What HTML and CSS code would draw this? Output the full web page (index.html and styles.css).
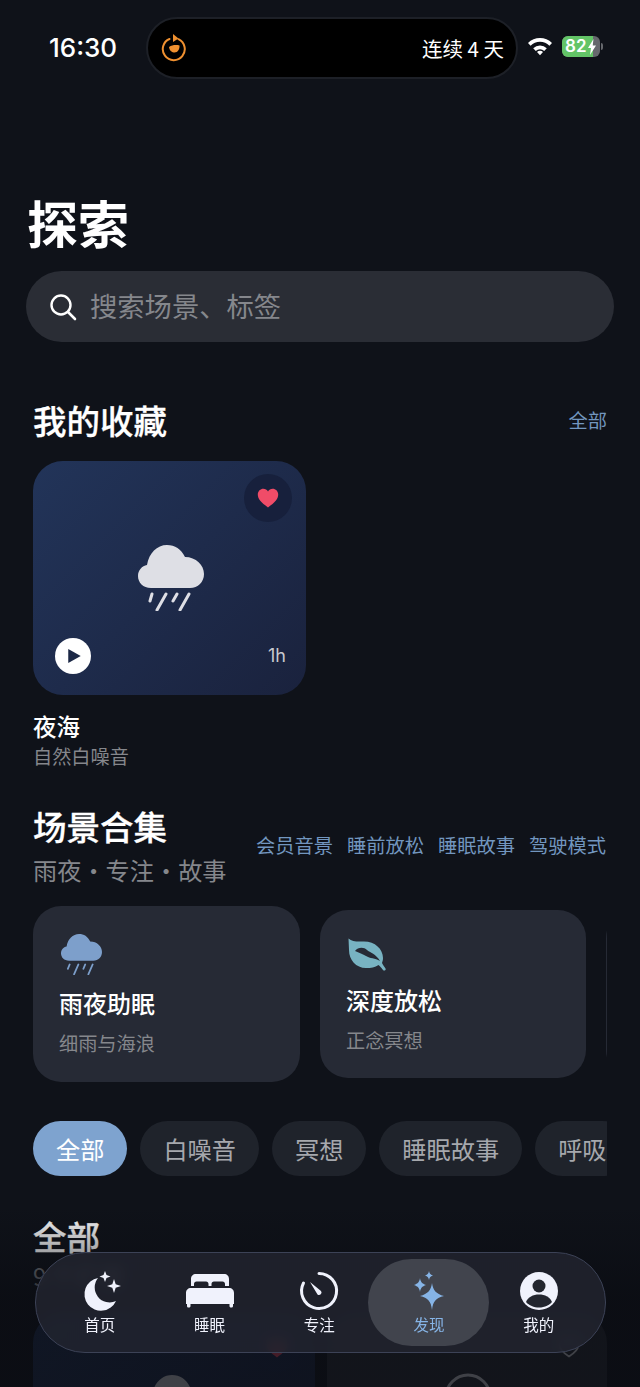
FILE: index.html
```html
<!DOCTYPE html>
<html lang="zh-CN">
<head>
    <meta charset="UTF-8">
    <meta name="viewport" content="width=device-width, initial-scale=1.0">
    <title>探索</title>
    <link rel="stylesheet" href="styles.css">
</head>
<body>
    <div class="screen">
        <div class="status-bar">
            <span class="clock">16:30</span>
            <div class="island">
                <svg class="island-icon" viewBox="0 0 26 28" width="26" height="28">
                    <path d="M17.500 5.200A11 11 0 1 1 8.500 5" fill="none" stroke="#ef9030" stroke-width="2" stroke-linecap="round"/>
                    <path d="M12 0l5.500 4.500L12 8z" fill="#ef9030"/>
                    <path d="M8 13c3-2 7-2.500 10.500-1.500.3 3.500-1.500 7-5 7-1.300 0-2.200-.4-3-1-1.500-1-2.300-2.700-2.500-4.500z" fill="#ef9030"/>
                </svg>
                <span class="island-text">连续 4 天</span>
            </div>
            <svg class="wifi" viewBox="0 0 26 20" width="26" height="20">
                <path d="M1 7a17 17 0 0 1 24 0l-2.600 2.700a13.300 13.300 0 0 0-18.800 0zM6.200 12.200a9.700 9.700 0 0 1 13.600 0l-2.600 2.700a6 6 0 0 0-8.400 0zM10 16a4.200 4.200 0 0 1 6 0l-3 3.300z" fill="#fff"/>
            </svg>
            <div class="battery">
                <div class="battery-body">
                    <div class="battery-level">82</div>
                    <svg class="battery-bolt" viewBox="0 0 8 16" width="8" height="16"><path d="M5.500 0L0 9h3l-1 7 6-9.500H4.700z" fill="#fff"/></svg>
                </div>
                <div class="battery-cap"></div>
            </div>
        </div>

        <h1 class="page-title">探索</h1>

        <div class="search">
            <svg viewBox="0 0 30 30" width="30" height="30">
                <circle cx="13" cy="13" r="9.500" fill="none" stroke="#fff" stroke-width="2.400"/>
                <path d="M20 20l7 7" stroke="#fff" stroke-width="2.600" stroke-linecap="round"/>
            </svg>
            <span class="search-text">搜索场景、标签</span>
        </div>

        <div class="section-head fav-head">
            <h2>我的收藏</h2>
            <a class="link">全部</a>
        </div>

        <div class="fav-card">
            <div class="heart-btn">
                <svg viewBox="0 0 22 20" width="22" height="20"><path d="M11 19.500C4 14.500 .8 11 .8 6.600.8 3 3.500.8 6.300.8c2 0 3.700 1 4.700 2.700C12 1.800 13.700.8 15.700.8c2.800 0 5.500 2.200 5.500 5.800 0 4.400-3.200 7.900-10.200 12.900z" fill="#f04c68"/></svg>
            </div>
            <svg class="fav-cloud" viewBox="0 0 66 66" width="66" height="66">
                <path d="M13 43C5 43 0 37.500 0 31 0 25 4 21 9 20 11 8 19 0 29 0c8 0 14 4 18 12 11 0 19 8 19 17 0 8-6 14-14 14z" fill="#dedfe5"/>
                <path d="M14 49l-2 7M28 49l-9 16M39 49l-4 7M51 49l-9 16" stroke="#dedfe5" stroke-width="3" stroke-linecap="round"/>
            </svg>
            <div class="fav-foot">
                <div class="play-btn">
                    <svg viewBox="0 0 16 18" width="15" height="16"><path d="M1 1l14 8-14 8z" fill="#1c2846"/></svg>
                </div>
                <span class="duration">1h</span>
            </div>
        </div>
        <div class="fav-title">夜海</div>
        <div class="fav-sub">自然白噪音</div>

        <div class="collection-head">
            <div>
                <h2>场景合集</h2>
                <div class="collection-sub">雨夜・专注・故事</div>
            </div>
            <div class="tags">
                <a class="link">会员音景</a>
                <a class="link">睡前放松</a>
                <a class="link">睡眠故事</a>
                <a class="link">驾驶模式</a>
            </div>
        </div>

        <div class="scene-row">
            <div class="scene-card scene-big">
                <svg viewBox="0 0 66 66" width="41" height="41">
                    <path d="M13 43C5 43 0 37.500 0 31 0 25 4 21 9 20 11 8 19 0 29 0c8 0 14 4 18 12 11 0 19 8 19 17 0 8-6 14-14 14z" fill="#7d9fcb"/>
                    <path d="M14 49l-3 7M28 49l-7 16M39 49l-3 7M51 49l-7 16" stroke="#7d9fcb" stroke-width="2.800" stroke-linecap="round"/>
                </svg>
                <div class="scene-title">雨夜助眠</div>
                <div class="scene-sub">细雨与海浪</div>
            </div>
            <div class="scene-card scene-small">
                <svg viewBox="0 0 40 34" width="40" height="34">
                    <path d="M.5.500C4 4 9 3.500 16 3.500c11 0 19 7.500 19 16.500 0 2-.5 3.500-1 5 1 2 2.500 4 3.500 5.500 1 1.500-1.500 3-2.500 1.500-1.500-2-3-4-4.500-5-3.500 2.500-7.500 3-12.500 3C8 30 1 22 1 12z" fill="#78b3c2"/>
                    <path d="M7 13c3-4 9-4 12-1 3 2.500 9 4 13 11-5-3-10-2.500-14-5-3-2-7-3-11-5z" fill="#262a35"/>
                </svg>
                <div class="scene-title">深度放松</div>
                <div class="scene-sub">正念冥想</div>
            </div>
            <div class="scene-card scene-small"></div>
        </div>

        <div class="chips">
            <span class="chip chip-on">全部</span>
            <span class="chip">白噪音</span>
            <span class="chip">冥想</span>
            <span class="chip">睡眠故事</span>
            <span class="chip">呼吸</span>
        </div>

        <h2 class="all-title">全部</h2>
        <div class="all-sub">9 个扩展</div>

        <div class="grid">
            <div class="grid-card grid-blue">
                <div class="grid-heart grid-heart-blue"><svg viewBox="0 0 22 20" width="22" height="20"><path d="M11 19.500C4 14.500 .8 11 .8 6.600.8 3 3.500.8 6.300.8c2 0 3.700 1 4.700 2.700C12 1.800 13.700.8 15.700.8c2.800 0 5.500 2.200 5.500 5.800 0 4.400-3.200 7.900-10.200 12.900z" fill="#f04c68"/></svg></div>
                <svg class="grid-cloud" viewBox="0 0 66 43" width="66" height="43">
                    <path d="M13 43C5 43 0 37.500 0 31 0 25 4 21 9 20 11 8 19 0 29 0c8 0 14 4 18 12 11 0 19 8 19 17 0 8-6 14-14 14z" fill="#dedfe5"/>
                </svg>
            </div>
            <div class="grid-card grid-dark">
                <div class="grid-heart"><svg viewBox="0 0 22 20" width="22" height="20"><path d="M11 18.500C4 14 1.500 11 1.500 6.800 1.500 3.500 4 1.500 6.300 1.500c2 0 3.700 1 4.700 2.700 1-1.700 2.700-2.700 4.700-2.700 2.300 0 4.800 2 4.800 5.300 0 4.200-2.500 7.200-9.500 11.700z" fill="none" stroke="#dedfe5" stroke-width="1.800"/></svg></div>
                <svg class="grid-ring" viewBox="0 0 48 48" width="48" height="48">
                    <circle cx="24" cy="24" r="22" fill="none" stroke="#dedfe5" stroke-width="3"/>
                    <path d="M12 28c-3-6 2-10 6-9 2-5 9-5 12 0 5-1 9 4 6 9" fill="none" stroke="#dedfe5" stroke-width="2.500" stroke-linecap="round"/>
                    <path d="M19 19c1 3 0 5-1 7M29 19c-1 3 0 5 1 7" fill="none" stroke="#dedfe5" stroke-width="2"/>
                </svg>
            </div>
        </div>

        <div class="bottom-fade"></div>

        <nav class="tabbar">
            <div class="tab">
                <svg viewBox="0 0 40 40" width="40" height="40">
                    <path d="M18 7A16.500 16.500 0 1 0 36 30 15 15 0 0 1 18 7z" fill="#f0f2fc"/>
                    <path d="M25 0l1.500 4 4 1.500-4 1.500L25 11l-1.500-4-4-1.500 4-1.500zM34 8l1.700 5.300L41 15l-5.300 1.700L34 22l-1.700-5.300L27 15l5.300-1.700z" fill="#f0f2fc"/>
                </svg>
                <span>首页</span>
            </div>
            <div class="tab">
                <svg viewBox="0 0 48 40" width="48" height="40">
                    <path d="M5 15V8c0-3 2-5 5-5h28c3 0 5 2 5 5v7h-4v-2c0-1.500-1-2.500-2.500-2.500H28c-1.500 0-2.500 1-2.500 2.500v2h-3v-2c0-1.500-1-2.500-2.500-2.500h-9.500C9 10.500 8 11.500 8 13v2z" fill="#f0f2fc"/>
                    <path d="M5 17h38c3 0 5 2 5 5v11H0V22c0-3 2-5 5-5zM1 33h3.500v2c0 1-.8 1.500-1.800 1.500S1 36 1 35zM43.500 33H47v2c0 1-.7 1.500-1.700 1.500s-1.800-.5-1.800-1.500z" fill="#f0f2fc"/>
                </svg>
                <span>睡眠</span>
            </div>
            <div class="tab">
                <svg viewBox="0 0 40 40" width="40" height="40">
                    <path d="M20 2.500a17.500 17.500 0 1 1-15.500 9.500" fill="none" stroke="#f0f2fc" stroke-width="3" stroke-linecap="round"/>
                    <path d="M11 11l11 9a2.500 2.500 0 0 1-3.500 3.500z" fill="#f0f2fc"/>
                </svg>
                <span>专注</span>
            </div>
            <div class="tab tab-on">
                <svg viewBox="0 0 40 40" width="40" height="40">
                    <path d="M23 12c1 7 4 11 12 13-8 2-11 5-12 14-1-9-4-12-12-14 8-2 11-6 12-13zM11 7c.6 4 2 5.500 6 7-4 1.500-5.400 3-6 7-.6-4-2-5.500-6-7 4-1.500 5.400-3 6-7zM20 0c.4 2.500 1.200 3.500 4 4.500-2.800 1-3.600 2-4 4.500-.4-2.500-1.200-3.500-4-4.500 2.800-1 3.600-2 4-4.500z" fill="#86b4e6"/>
                </svg>
                <span>发现</span>
            </div>
            <div class="tab">
                <svg viewBox="0 0 40 40" width="40" height="40">
                    <circle cx="20" cy="20" r="19" fill="#f0f2fc"/>
                    <circle cx="20" cy="15" r="6.500" fill="#23262f"/>
                    <path d="M7 31c2-5 7-7.500 13-7.500S31 26 33 31c-3 3.500-8 5.500-13 5.500S10 34.500 7 31z" fill="#23262f"/>
                </svg>
                <span>我的</span>
            </div>
        </nav>
    </div>
</body>
</html>
```

FILE: styles.css
```css
* {
    box-sizing: border-box;
    margin: 0;
}
body {
    background: #0f1219;
    font-family: "Noto Sans CJK SC", "Noto Sans", sans-serif;
    color: #fff;
}
.screen {
    position: relative;
    width: 640px;
    height: 1387px;
    overflow: hidden;
    background: #0f1219;
}

/* status bar */
.status-bar {
    display: flex;
    align-items: center;
    height: 62px;
    margin-top: 17px;
    padding-left: 49px;
}
.clock {
    width: 97px;
    margin-top: -2px;
    font-family: Inter, sans-serif;
    font-size: 26px;
    font-weight: 500;
}
.island {
    display: flex;
    align-items: center;
    justify-content: space-between;
    width: 372px;
    height: 62px;
    padding: 0 12px 0 13px;
    background: #000;
    border: 2px solid #1d2027;
    border-radius: 31px;
}
.island-text {
    font-size: 20.500px;
}
.wifi {
    margin: -4px 0 0 9px;
}
.battery {
    display: flex;
    align-items: center;
    margin: -4px 0 0 9px;
}
.battery-body {
    position: relative;
    display: flex;
    width: 38px;
    height: 21px;
    border-radius: 6px;
    background: #66686d;
    overflow: hidden;
}
.battery-level {
    width: 31px;
    padding-left: 3px;
    background: #63c467;
    font-family: Inter, sans-serif;
    font-size: 17px;
    font-weight: 600;
    line-height: 21px;
}
.battery-bolt {
    position: absolute;
    top: 3px;
    right: 4px;
}
.battery-cap {
    width: 2px;
    height: 7px;
    margin-left: 1px;
    background: #66686d;
    border-radius: 0 2px 2px 0;
}

.page-title {
    margin: 113px 0 0 27px;
    font-size: 51px;
    font-weight: 700;
    line-height: 60px;
}

.search {
    display: flex;
    align-items: center;
    gap: 12px;
    height: 71px;
    margin: 19px 26px 0;
    padding-left: 22px;
    background: #2a2d35;
    border-radius: 36px;
    font-size: 27.300px;
    color: #85878c;
}
.search-text {
    padding-bottom: 3px;
}

h2 {
    font-size: 33.500px;
    font-weight: 500;
    line-height: 46px;
    -webkit-text-stroke: 0.3px currentColor;
}
.link {
    font-size: 19.250px;
    color: #7296bf;
}

.section-head {
    display: flex;
    align-items: center;
    justify-content: space-between;
    padding: 0 33px;
}
.fav-head {
    margin-top: 55px;
}

/* favourite card */
.fav-card {
    position: relative;
    display: flex;
    align-items: center;
    justify-content: center;
    width: 273px;
    height: 234px;
    margin: 18px 0 0 33px;
    background: linear-gradient(135deg, #223459, #1a223d);
    border-radius: 30px;
}
.heart-btn {
    position: absolute;
    top: 13px;
    right: 14px;
    display: flex;
    align-items: center;
    justify-content: center;
    width: 48px;
    height: 48px;
    border-radius: 50%;
    background: #17203c;
}
.fav-cloud {
    margin-left: 2px;
}
.fav-foot {
    position: absolute;
    left: 22px;
    right: 20px;
    bottom: 21px;
    display: flex;
    align-items: center;
    justify-content: space-between;
}
.play-btn {
    display: flex;
    align-items: center;
    justify-content: center;
    width: 36px;
    height: 36px;
    padding-left: 3px;
    border-radius: 50%;
    background: #fff;
}
.duration {
    padding-bottom: 2px;
    font-family: Inter, sans-serif;
    font-size: 18px;
    color: #c8cad0;
}
.fav-title {
    margin: 14px 0 0 33px;
    font-size: 23.500px;
    font-weight: 500;
    line-height: 34px;
}
.fav-sub {
    margin-left: 33px;
    font-size: 19.200px;
    line-height: 26px;
    color: #85878c;
}

/* scene collection */
.collection-head {
    display: flex;
    align-items: flex-end;
    justify-content: space-between;
    margin-top: 34px;
    padding: 0 33px;
}
.collection-sub {
    margin-top: 5px;
    font-size: 24.200px;
    line-height: 32px;
    color: #85878c;
}
.tags {
    display: flex;
    gap: 14px;
    margin: 0 1px 27px 0;
}
.scene-row {
    display: flex;
    align-items: center;
    gap: 20px;
    height: 176px;
    margin: 20px 33px 0;
    overflow: hidden;
}
.scene-card {
    flex: none;
    width: 266px;
    background: #262a35;
    border-radius: 28px;
}
.scene-big {
    width: 267px;
    height: 176px;
    padding: 28px 26px;
}
.scene-small {
    height: 168px;
    padding: 28px 26px;
}
.scene-card svg {
    display: block;
    margin-left: 2px;
}
.scene-title {
    margin-top: 10px;
    font-size: 24px;
    font-weight: 500;
    line-height: 36px;
}
.scene-sub {
    margin-top: 8px;
    font-size: 19.200px;
    line-height: 28px;
    color: #85878c;
}

/* chips */
.chips {
    display: flex;
    gap: 13px;
    margin: 39px 33px 0;
    overflow: hidden;
}
.chip {
    flex: none;
    height: 55px;
    padding: 0 23px;
    border-radius: 28px;
    background: #1f232b;
    font-size: 24.200px;
    line-height: 55px;
    color: #a6a8ad;
}
.chip-on {
    background: #7ea3cf;
    color: #fff;
}

.all-title {
    margin: 37px 0 0 33px;
}
.all-sub {
    margin: 1px 0 0 33px;
    font-size: 24px;
    line-height: 32px;
    color: #85878c;
}

.grid {
    display: grid;
    grid-template-columns: 282px 280px;
    gap: 12px;
    margin: 21px 33px 0;
}
.grid-card {
    position: relative;
    height: 234px;
    border-radius: 30px;
}
.grid-blue {
    background: linear-gradient(135deg, #223459, #1a223d);
}
.grid-dark {
    background: #2a2d35;
}
.grid-heart {
    position: absolute;
    top: 11px;
    right: 14px;
    display: flex;
    align-items: center;
    justify-content: center;
    width: 48px;
    height: 48px;
    border-radius: 50%;
    background: #2a2d35;
}
.grid-heart-blue {
    background: #1d2a4c;
}
.grid-cloud {
    position: absolute;
    top: 62px;
    left: 110px;
}
.grid-ring {
    position: absolute;
    top: 60px;
    left: 117px;
}

.bottom-fade {
    position: absolute;
    left: 0;
    right: 0;
    bottom: 0;
    height: 180px;
    background: linear-gradient(rgba(10, 12, 18, 0), rgba(10, 12, 18, 0.75) 50%, rgba(10, 12, 18, 0.75));
}

/* floating tab bar */
.tabbar {
    position: absolute;
    left: 35px;
    top: 1252px;
    display: grid;
    grid-template-columns: repeat(5, minmax(0, 1fr));
    align-items: center;
    width: 571px;
    height: 101px;
    padding: 0 11.500px 0 9px;
    background: rgba(34, 37, 47, 0.82);
    border: 1.500px solid #3c4256;
    border-radius: 50px;
    backdrop-filter: blur(6px);
}
.tab {
    display: flex;
    flex-direction: column;
    align-items: center;
    justify-content: center;
    gap: 3px;
    height: 87px;
    font-size: 15.500px;
    line-height: 20px;
    color: #f0f2fc;
}
.tab svg {
    display: block;
    overflow: visible;
}
.tab-on {
    width: 121px;
    justify-self: center;
    background: #41444d;
    border-radius: 44px;
    color: #86b4e6;
}
```
